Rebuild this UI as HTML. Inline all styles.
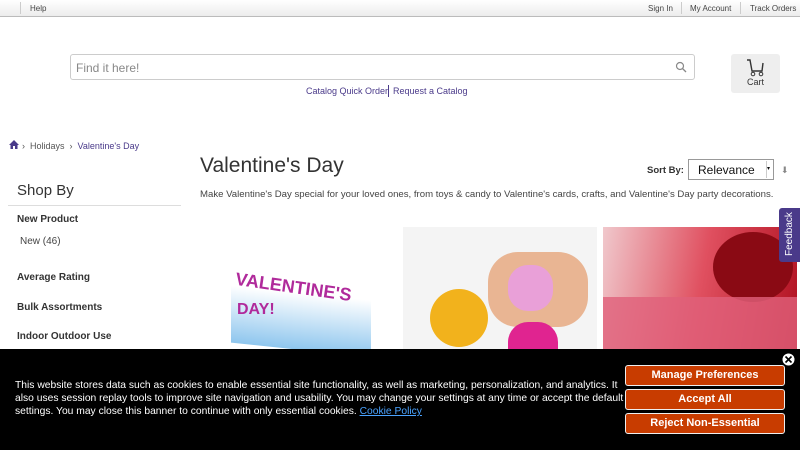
<!DOCTYPE html>
<html><head><meta charset="utf-8"><style>
*{margin:0;padding:0;box-sizing:border-box}
body{width:800px;height:450px;overflow:hidden;background:#fff;font-family:"Liberation Sans",sans-serif;color:#333;position:relative}
.a{position:absolute;white-space:nowrap}
.top{left:0;top:0;width:800px;height:17px;background:linear-gradient(#fff,#ececec);border-bottom:1px solid #bbb;font-size:8px;color:#444}
.top span{position:absolute;top:4px}
.sep{position:absolute;top:2px;width:1px;height:12px;background:#ccc}
</style></head><body>
<div class="a top">
<div class="sep" style="left:20px"></div><span style="left:30px">Help</span>
<span style="left:648px">Sign In</span><div class="sep" style="left:681px"></div>
<span style="left:690px">My Account</span><div class="sep" style="left:740px"></div>
<span style="left:750px">Track Orders</span>
</div>
<div class="a" style="left:70px;top:54px;width:625px;height:26px;border:1px solid #ccc;border-radius:3px;font-size:12px;color:#888;padding:6px 5px">Find it here!
<svg class="a" style="right:7px;top:6px" width="12" height="12" viewBox="0 0 12 12"><circle cx="5" cy="5" r="3.5" fill="none" stroke="#888" stroke-width="1.2"/><path d="M7.5 7.5L11 11" stroke="#888" stroke-width="1.3"/></svg></div>
<div class="a" style="left:306px;top:86px;font-size:9px;color:#4a3a8a">Catalog Quick Order</div>
<div class="a" style="left:388px;top:85px;width:1px;height:12px;background:#4a3a8a"></div>
<div class="a" style="left:393px;top:86px;font-size:9px;color:#4a3a8a">Request a Catalog</div>
<div class="a" style="left:731px;top:54px;width:49px;height:39px;background:#eee;border-radius:3px;font-size:9px;text-align:center;color:#333">
<svg style="margin-top:5px" width="20" height="18" viewBox="0 0 20 18"><path d="M1 1h3l2 11h10l1-8" fill="none" stroke="#333" stroke-width="1.4"/><circle cx="7" cy="15" r="1.8" fill="none" stroke="#333"/><circle cx="15" cy="15" r="1.8" fill="none" stroke="#333"/></svg><div style="margin-top:-2px">Cart</div></div>
<svg class="a" style="left:9px;top:140px" width="10" height="9" viewBox="0 0 10 9"><path d="M5 0L0 5h1.5v4h2.5V6h2v3h2.5V5H10z" fill="#4a3a8a"/></svg>
<div class="a" style="left:22px;top:141px;font-size:9px;color:#555">› &nbsp;Holidays &nbsp;› &nbsp;<span style="color:#4a3a8a">Valentine's Day</span></div>
<div class="a" style="left:200px;top:154px;font-size:21px;color:#333;font-weight:500">Valentine's Day</div>
<div class="a" style="left:200px;top:189px;font-size:9.6px;color:#444">Make Valentine's Day special for your loved ones, from toys &amp; candy to Valentine's cards, crafts, and Valentine's Day party decorations.</div>
<div class="a" style="left:17px;top:182px;font-size:15px;color:#333">Shop By</div>
<div class="a" style="left:8px;top:205px;width:173px;height:1px;background:#ddd"></div>
<div class="a" style="left:17px;top:214px;font-size:10px;font-weight:bold;color:#333">New Product</div>
<div class="a" style="left:20px;top:236px;font-size:10px;color:#444">New (46)</div>
<div class="a" style="left:17px;top:272px;font-size:10px;font-weight:bold;color:#333">Average Rating</div>
<div class="a" style="left:17px;top:302px;font-size:10px;font-weight:bold;color:#333">Bulk Assortments</div>
<div class="a" style="left:17px;top:331px;font-size:10px;font-weight:bold;color:#333">Indoor Outdoor Use</div>
<div class="a" style="left:647px;top:165px;font-size:9.5px;font-weight:bold;color:#333">Sort By:</div>
<div class="a" style="left:688px;top:159px;width:86px;height:21px;border:1px solid #999;font-size:12px;padding:3px 9px;color:#111">Relevance<div class="a" style="right:1px;top:1px;width:6px;height:17px;border-left:1px solid #ccc;font-size:6px;padding-top:4px">▾</div></div>
<div class="a" style="left:781px;top:165px;font-size:9px;color:#888">⬇</div>
<div class="a" style="left:205px;top:227px;width:193px;height:123px;background:#fff">
<div class="a" style="left:26px;top:28px;width:140px;height:95px;background:linear-gradient(#fff 40%,#8ec6ee);border-radius:10px 10px 0 0;transform:skewY(6deg)"></div>
<div class="a" style="left:30px;top:50px;font-size:18px;font-weight:bold;color:#b02a9b;transform:rotate(8deg)">VALENTINE'S</div>
<div class="a" style="left:32px;top:74px;font-size:16px;font-weight:bold;color:#b02a9b">DAY!</div>
</div>
<div class="a" style="left:403px;top:227px;width:194px;height:123px;background:#f4f4f4">
<div class="a" style="left:27px;top:62px;width:58px;height:58px;border-radius:50%;background:#f2b21c"></div>
<div class="a" style="left:85px;top:25px;width:100px;height:75px;border-radius:30px;background:#e9b593"></div>
<div class="a" style="left:105px;top:38px;width:45px;height:46px;border-radius:20px;background:#e9a0d8"></div>
<div class="a" style="left:105px;top:95px;width:50px;height:28px;border-radius:20px 20px 0 0;background:#e02490"></div>
</div>
<div class="a" style="left:603px;top:227px;width:194px;height:123px;background:linear-gradient(100deg,#f0c8cc,#e05060 50%,#b01020)">
<div class="a" style="left:110px;top:5px;width:80px;height:70px;border-radius:50%;background:#8a0a14"></div>
<div class="a" style="left:0;top:70px;width:194px;height:53px;background:#e0607a;opacity:.8"></div>
</div>
<div class="a" style="left:779px;top:208px;width:21px;height:54px;background:#4a3a8a;border-radius:3px 0 0 3px"><div class="a" style="left:5px;top:48px;transform:rotate(-90deg);transform-origin:0 0;font-size:10px;color:#fff">Feedback</div></div>
<div class="a" style="left:0;top:349px;width:800px;height:101px;background:#000"></div>
<div class="a" style="left:15px;top:379px;width:616px;white-space:normal;font-family:'Liberation Sans',sans-serif;font-size:10.3px;line-height:13px;color:#fff">This website stores data such as cookies to enable essential site functionality, as well as marketing, personalization, and analytics. It also uses session replay tools to improve site navigation and usability. You may change your settings at any time or accept the default settings. You may close this banner to continue with only essential cookies. <span style="color:#4aa3ff;text-decoration:underline">Cookie Policy</span></div>
<div class="a" style="left:625px;top:365px;width:160px;height:21px;background:#c83c00;border:1px solid #eee;border-radius:3px;color:#fff;font:bold 11px 'Liberation Sans',sans-serif;text-align:center;line-height:19px">Manage Preferences</div>
<div class="a" style="left:625px;top:389px;width:160px;height:21px;background:#c83c00;border:1px solid #eee;border-radius:3px;color:#fff;font:bold 11px 'Liberation Sans',sans-serif;text-align:center;line-height:19px">Accept All</div>
<div class="a" style="left:625px;top:413px;width:160px;height:21px;background:#c83c00;border:1px solid #eee;border-radius:3px;color:#fff;font:bold 11px 'Liberation Sans',sans-serif;text-align:center;line-height:19px">Reject Non-Essential</div>
<svg class="a" style="left:782px;top:353px" width="13" height="13" viewBox="0 0 13 13"><circle cx="6.5" cy="6.5" r="6" fill="#fff"/><path d="M3.5 3.5l6 6M9.5 3.5l-6 6" stroke="#000" stroke-width="1.6"/></svg>
</body></html>
